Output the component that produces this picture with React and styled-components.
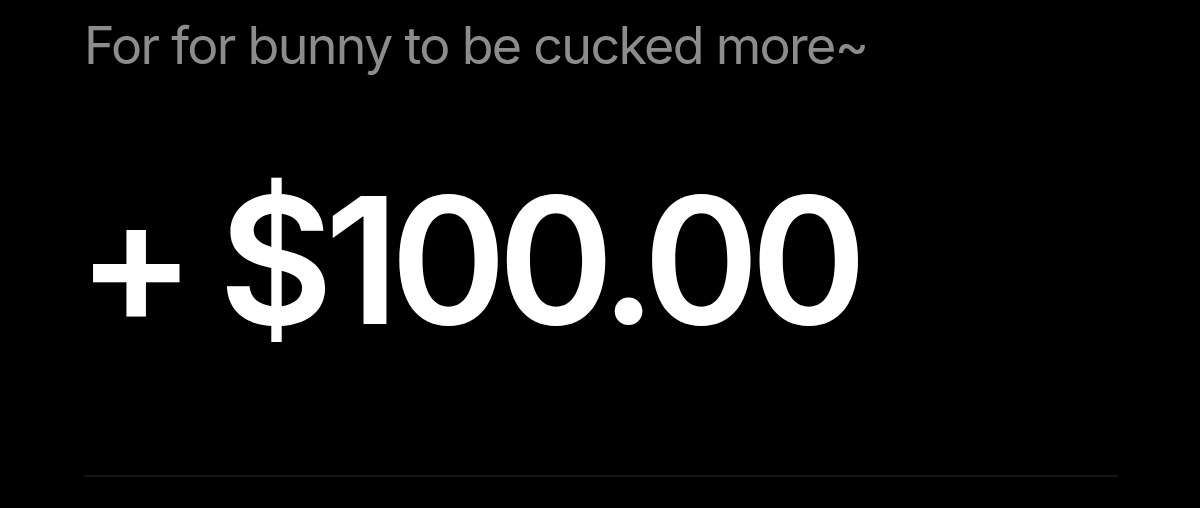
import styled, { createGlobalStyle } from "styled-components";

const GlobalStyle = createGlobalStyle`
  html, body {
    margin: 0;
    padding: 0;
    background: #000;
  }
  body {
    font-family: Inter, "Noto Sans", sans-serif;
    -webkit-font-smoothing: antialiased;
  }
`;

const Screen = styled.main`
  width: 1200px;
  height: 508px;
  overflow: hidden;
  background: #000;
  display: flex;
  flex-direction: column;
  padding: 0 82px 0 84px;
  box-sizing: border-box;
`;

const Note = styled.p`
  margin: 14px 0 0;
  font-size: 52px;
  line-height: 64px;
  font-weight: 400;
  color: #8c8c8c;
  letter-spacing: -1.7px;
  white-space: nowrap;
`;

const Amount = styled.h1`
  margin: 82px 0 0;
  font-size: 176px;
  line-height: 200px;
  font-weight: 600;
  color: #fff;
  letter-spacing: -8.6px;
  white-space: nowrap;
`;

const Sign = styled.span`
  margin-left: -7px;
  margin-right: 32px;
`;

const Divider = styled.hr`
  margin: 115px 0 0;
  border: 0;
  height: 2px;
  background: #141414;
`;

export default function App() {
  return (
    <>
      <GlobalStyle />
      <Screen>
        <Note>For for bunny to be cucked more~</Note>
        <Amount>
          <Sign>+</Sign>$100.00
        </Amount>
        <Divider />
      </Screen>
    </>
  );
}
